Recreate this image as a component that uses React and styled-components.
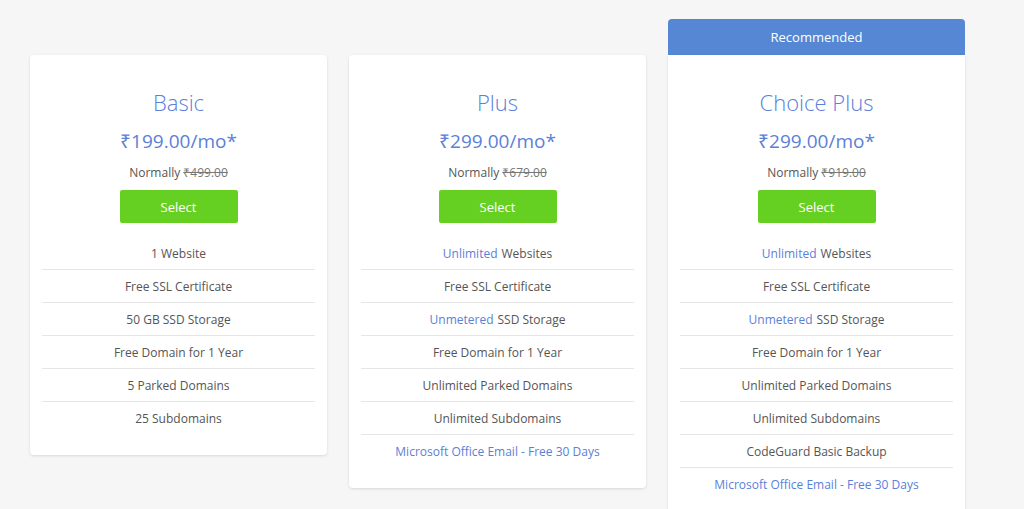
import React from "react";
import styled, { createGlobalStyle } from "styled-components";

const Global = createGlobalStyle`
	body {
		margin: 0;
		background: #f6f6f6;
		font-family: "Open Sans", "Liberation Sans", sans-serif;
	}
`;

const Page = styled.div`
	display: flex;
	align-items: flex-start;
	gap: 22px;
	padding: 19px 0 0 30px;
	height: 490px;
	overflow: hidden;
`;

const Column = styled.div`
	width: 297px;
	margin-top: ${({ offset }) => (offset ? "36px" : "0")};
	display: flex;
	flex-direction: column;
`;

const Banner = styled.div`
	height: 36px;
	background: #5587d4;
	color: #fff;
	font-size: 13px;
	display: flex;
	align-items: center;
	justify-content: center;
	border-radius: 4px 4px 0 0;
`;

const Card = styled.div`
	background: #fff;
	border-radius: ${({ top }) => (top ? "0 0 4px 4px" : "4px")};
	box-shadow: 0 1px 3px rgba(0, 0, 0, 0.12);
	padding: 32px 12px 20px;
	display: flex;
	flex-direction: column;
	align-items: center;
`;

const Title = styled.div`
	font-size: 22px;
	font-weight: 300;
	line-height: 30px;
	color: #5b80d8;
`;

const Price = styled.div`
	margin-top: 10px;
	font-size: 19px;
	line-height: 28px;
	color: #5b80d8;
`;

const Normally = styled.div`
	margin-top: 9px;
	font-size: 12px;
	line-height: 18px;
	color: #555;
	s { color: #777; }
`;

const Button = styled.button`
	margin-top: 8px;
	width: 118px;
	height: 33px;
	border: none;
	border-radius: 2px;
	background: #66d022;
	color: #fff;
	font-family: inherit;
	font-size: 13px;
`;

const Features = styled.div`
	margin-top: 14px;
	width: 100%;
`;

const Row = styled.div`
	height: 33px;
	display: flex;
	align-items: center;
	justify-content: center;
	font-size: 12px;
	color: ${({ blue }) => (blue ? "#5b80d8" : "#555")};
	border-bottom: 1px solid #e6e6e6;
	box-sizing: border-box;
	&:last-child { border-bottom: none; }
	em { font-style: normal; color: #5b80d8; margin-right: 4px; }
`;

const plans = [
	{
		name: "Basic", price: "₹199.00/mo*", normal: "₹499.00",
		features: [["1 Website"], ["Free SSL Certificate"], ["50 GB SSD Storage"], ["Free Domain for 1 Year"], ["5 Parked Domains"], ["25 Subdomains"]],
	},
	{
		name: "Plus", price: "₹299.00/mo*", normal: "₹679.00",
		features: [["Websites", "Unlimited"], ["Free SSL Certificate"], ["SSD Storage", "Unmetered"], ["Free Domain for 1 Year"], ["Unlimited Parked Domains"], ["Unlimited Subdomains"], ["Microsoft Office Email - Free 30 Days", null, true]],
	},
	{
		name: "Choice Plus", price: "₹299.00/mo*", normal: "₹919.00", recommended: true,
		features: [["Websites", "Unlimited"], ["Free SSL Certificate"], ["SSD Storage", "Unmetered"], ["Free Domain for 1 Year"], ["Unlimited Parked Domains"], ["Unlimited Subdomains"], ["CodeGuard Basic Backup"], ["Microsoft Office Email - Free 30 Days", null, true]],
	},
];

export default function App() {
	return (
		<>
			<Global />
			<Page>
				{plans.map(p =>
					<Column key={p.name} offset={!p.recommended}>
						{p.recommended && <Banner>Recommended</Banner>}
						<Card top={p.recommended}>
							<Title>{p.name}</Title>
							<Price>{p.price}</Price>
							<Normally>Normally <s>{p.normal}</s></Normally>
							<Button>Select</Button>
							<Features>
								{p.features.map(([text, hl, blue]) =>
									<Row key={text + hl} blue={blue}>
										{hl && <em>{hl}</em>}{text}
									</Row>,
								)}
							</Features>
						</Card>
					</Column>,
				)}
			</Page>
		</>
	);
}
